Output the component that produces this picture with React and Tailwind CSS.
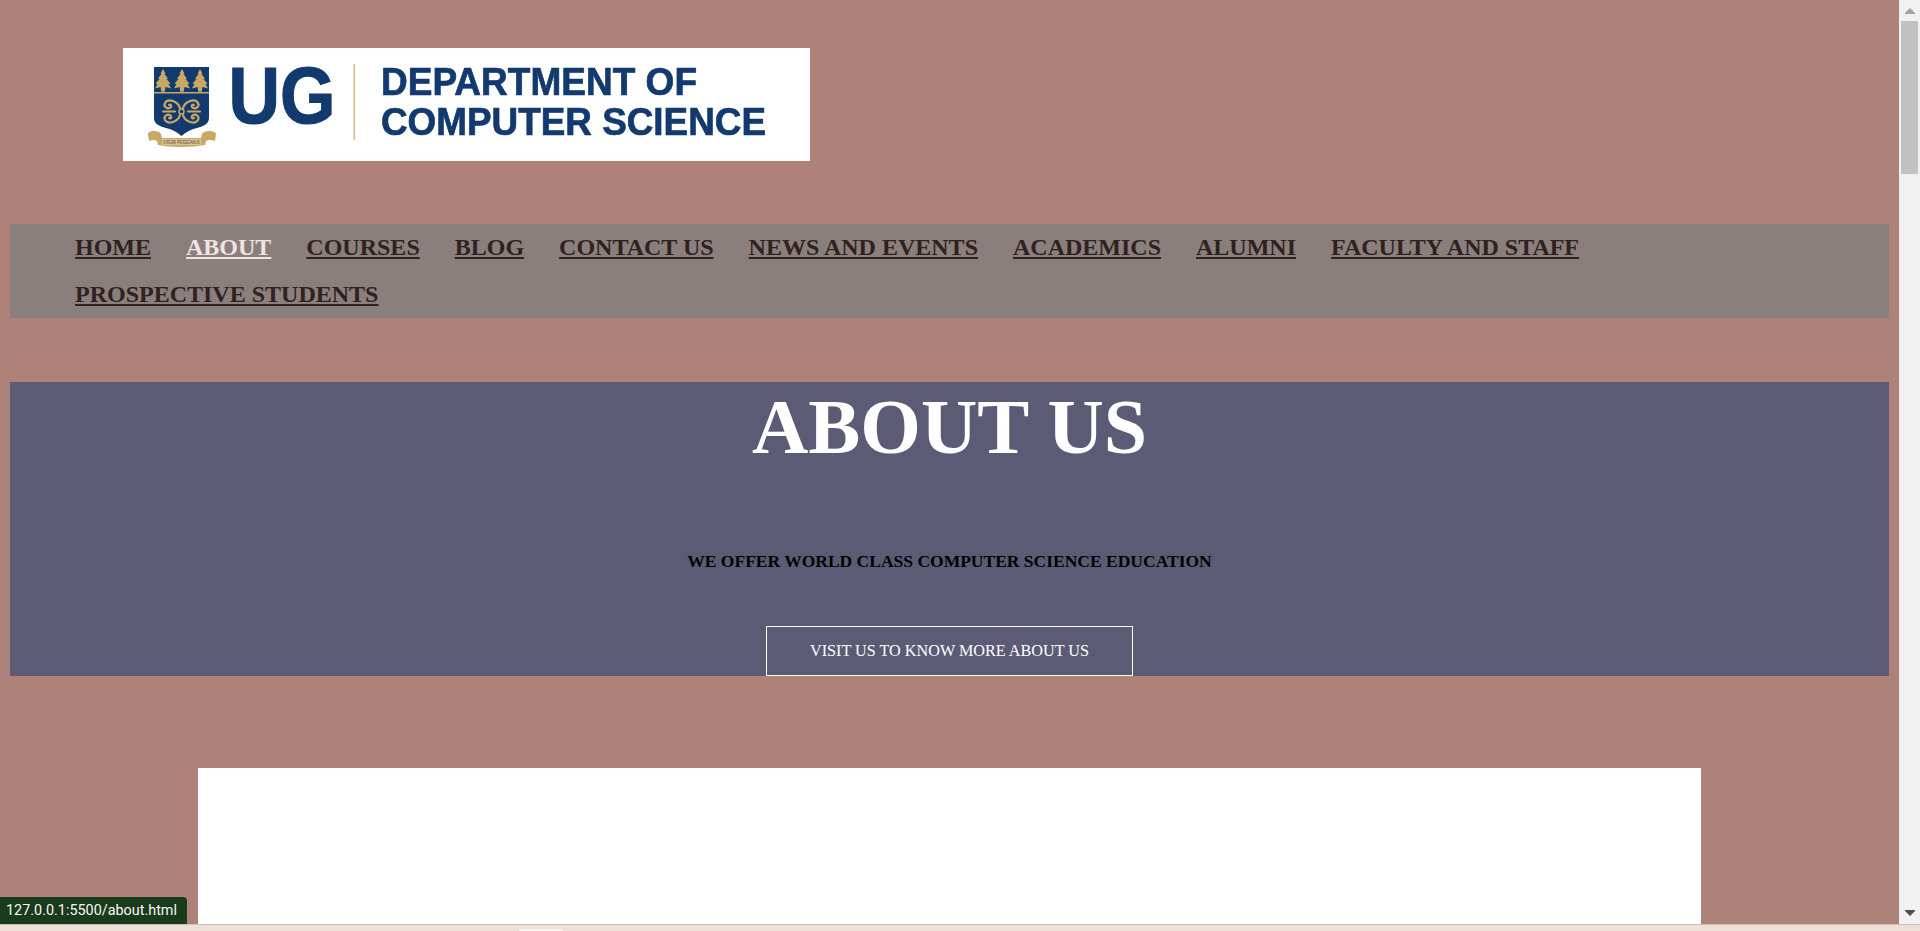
const links = [
  "HOME",
  "ABOUT",
  "COURSES",
  "BLOG",
  "CONTACT US",
  "NEWS AND EVENTS",
  "ACADEMICS",
  "ALUMNI",
  "FACULTY AND STAFF",
  "PROSPECTIVE STUDENTS",
];

// one of the three trees on the crest
const Tree = ({ x }) => (
  <path
    transform={`translate(${x} 0)`}
    fill="#c9a765"
    d="M0 69l2.500 4.500-1 .5 3.500 4.500-1.500 .5 4 4.500-2 .5 2.500 4.500-5.500-1.500-.8 4.700h-3.400l-.8-4.700-5.500 1.500 2.500-4.500-2-.5 4-4.500-1.500-.5 3.500-4.500-1-.5z"
  />
);

const Logo = () => (
  <svg width="687" height="113" viewBox="123 48 687 113" className="block blur-[0.4px]">
    <rect x="123" y="48" width="687" height="113" fill="#fff" />
    {/* crest */}
    <path d="M154 67h55v51c0 6-5 8-12 10-6 1.500-11 4-15.500 8-4.500-4-9.500-6.500-15.500-8-7-2-12-4-12-10z" fill="#123a6e" />
    <Tree x={163} />
    <Tree x={182} />
    <Tree x={200} />
    <rect x="154" y="92" width="55" height="1.500" fill="#c9a765" />
    <g fill="none" stroke="#c9a765" strokeWidth="2.200" strokeLinecap="round">
      <path d="M180 108c-2-7-12-10-15-5-2 4 3 7 6 4 1-2-1-3-2-2" />
      <path d="M183 108c2-7 12-10 15-5 2 4-3 7-6 4-1-2 1-3 2-2" />
      <path d="M180 115c-2 7-12 10-15 5-2-4 3-7 6-4 1 2-1 3-2 2" />
      <path d="M183 115c2 7 12 10 15 5 2-4-3-7-6-4-1 2 1 3 2 2" />
      <path d="M163 111.500h12M188 111.500h12" />
      <circle cx="181.500" cy="111.500" r="2.500" strokeWidth="1.500" />
    </g>
    {/* ribbon */}
    <path d="M148 134c0-2 3-3 6-3 4 0 6 1 7 3l1 4h39l1-4c1-2 4-3 7-3s7 1 7 3l-1 7c-3-1.500-7-1-9 0l-1 4c-12 2.500-35 2.500-47 0l-1-4c-2-1-5-1.500-8 0z" fill="#c9a765" />
    <rect x="162" y="139" width="39" height="6" fill="#d8c395" />
    <text x="181.500" y="144" textAnchor="middle" fontFamily="Liberation Sans" fontSize="5" textLength="36" lengthAdjust="spacingAndGlyphs" fill="#5d4c2e">INTEGRI PROCEDAMUS</text>
    {/* wordmark */}
    <text x="228.500" y="122.500" fontFamily="Liberation Sans" fontWeight="700" fontSize="80" textLength="107" lengthAdjust="spacingAndGlyphs" fill="#123a6e" stroke="#123a6e" strokeWidth="1.200">UG</text>
    <rect x="353.500" y="64" width="1.500" height="76" fill="#d6bc88" />
    <text x="381" y="94.500" fontFamily="Liberation Sans" fontWeight="700" fontSize="38" textLength="316" lengthAdjust="spacingAndGlyphs" fill="#123a6e" stroke="#123a6e" strokeWidth="0.700">DEPARTMENT OF</text>
    <text x="381" y="134.500" fontFamily="Liberation Sans" fontWeight="700" fontSize="38" textLength="385" lengthAdjust="spacingAndGlyphs" fill="#123a6e" stroke="#123a6e" strokeWidth="0.700">COMPUTER SCIENCE</text>
  </svg>
);

const Scrollbar = () => (
  <div className="w-[21px] shrink-0 bg-[#f1f1f1] flex flex-col items-center">
    <svg width="10" height="6" viewBox="0 0 10 6" className="mt-[8px] mb-[7px] shrink-0">
      <path d="M5 0l5 5v1H0V5z" fill="#a3a3a3" />
    </svg>
    <div className="w-[17px] h-[153px] bg-[#c1c1c1]" />
    <svg width="10" height="6" viewBox="0 0 10 6" className="mt-auto mb-[8px] shrink-0">
      <path d="M5 6L0 1V0h10v1z" fill="#505050" />
    </svg>
  </div>
);

const App = () => {
  return (
    <div className="h-[931px] overflow-hidden flex flex-col font-['Liberation_Serif',serif] bg-[#ae8179] relative">
      <div className="flex flex-1 min-h-0">
        <div className="flex-1 min-w-0 px-[10px] overflow-hidden">
          <div className="pt-[48px] pl-[113px]">
            <Logo />
          </div>
          <nav className="mt-[63px] bg-[#8a7f7c] pl-[65px] flex flex-wrap gap-x-[35px] h-[94px]">
            {links.map((link) => (
              <a
                key={link}
                href="#"
                className={`text-[24px] leading-[47px] font-bold underline ${
                  link === "ABOUT" ? "text-[#f0e4e0]" : "text-[#2f2220]"
                }`}
              >
                {link}
              </a>
            ))}
          </nav>
          <section className="mt-[64px] h-[294px] bg-[#5b5b76] flex flex-col items-center">
            <h1 className="text-[78px] leading-[90px] font-bold text-white">ABOUT US</h1>
            <p className="mt-[79px] text-[17.500px] leading-[21px] font-bold text-black">
              WE OFFER WORLD CLASS COMPUTER SCIENCE EDUCATION
            </p>
            <a href="#" className="mt-[54px] w-[367px] h-[50px] border border-white text-white text-[16.200px] flex items-center justify-center">
              VISIT US TO KNOW MORE ABOUT US
            </a>
          </section>
          <div className="mt-[92px] mx-[188px] h-[300px] bg-white" />
        </div>
        <Scrollbar />
      </div>
      <div className="h-[7px] shrink-0 bg-[#efe0d7] border-t border-[#cdbdb3] flex pl-[519px]">
        <div className="mt-[4px] w-[44px] h-[2px] bg-[#f8f2ee] rounded-t-sm" />
      </div>
      <div className="absolute left-0 bottom-[7px] h-[27px] w-[187px] bg-[#1a3a1c] rounded-tr-[4px] text-[#f7f7f7] text-[14.400px] font-['Roboto',sans-serif] flex items-center pl-[6px]">
        127.0.0.1:5500/about.html
      </div>
    </div>
  );
};

export default App;
